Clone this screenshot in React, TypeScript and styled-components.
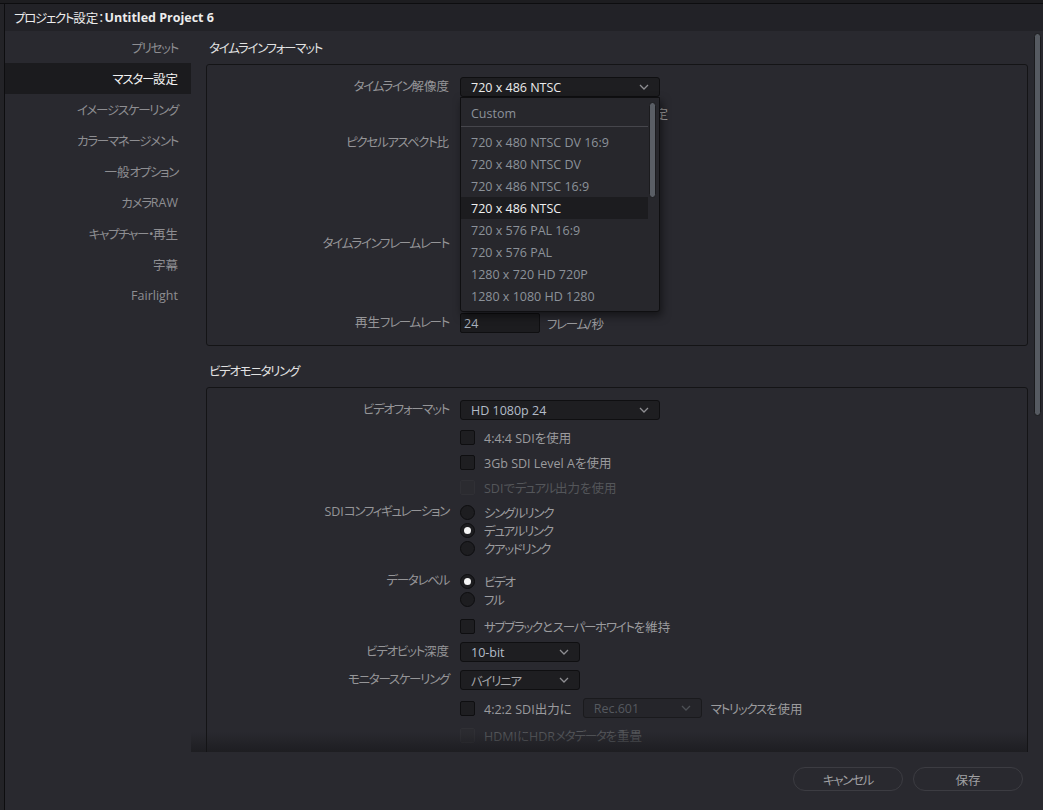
import React from 'react';
import styled, { createGlobalStyle, css } from 'styled-components';

const GlobalStyle = createGlobalStyle`
  html, body {
    margin: 0;
    padding: 0;
    background: #1c1c1f;
  }
  body {
    font-family: "Open Sans", "Noto Sans CJK JP", sans-serif;
    font-feature-settings: "palt";
    font-size: 12.5px;
    -webkit-font-smoothing: antialiased;
  }
  * { box-sizing: border-box; }
`;

// katakana in the app font is narrower than Noto's, so tighten those runs only
const Kana = styled.span`
  letter-spacing: -1.3px;
`;

const jp = (s: string) =>
  s.split(/([\u30a0-\u30ff]+)/).map((part, i) => (i % 2 ? <Kana key={i}>{part}</Kana> : part));

const Screen = styled.div`
  width: 1043px;
  height: 810px;
  display: flex;
  flex-direction: column;
  overflow: hidden;
  background: #1c1c1f;
`;

const TopStrip = styled.div`
  height: 4px;
  flex: none;
  background: #1d1d20;
  border-bottom: 1px solid #0d0d0f;
`;

const Main = styled.div`
  flex: 1;
  display: flex;
  min-height: 0;
`;

const LeftStrip = styled.div`
  width: 5px;
  flex: none;
  background: #232327;
  border-right: 1px solid #0d0d0f;
`;

const Dialog = styled.div`
  flex: 1;
  display: flex;
  flex-direction: column;
  background: #29292f;
  min-width: 0;
`;

const TitleBar = styled.div`
  height: 27px;
  flex: none;
  display: flex;
  align-items: center;
  padding-left: 9px;
  background: #222227;
  color: #ececec;
  font-size: 12.5px;
  white-space: pre;
`;

const TitleName = styled.span`
  font-weight: 700;
`;

const Body = styled.div`
  height: 721px;
  flex: none;
  display: flex;
  overflow: hidden;
`;

const Sidebar = styled.nav`
  width: 186px;
  flex: none;
  padding-top: 1px;
  display: flex;
  flex-direction: column;
`;

const NavItem = styled.div<{ $active?: boolean }>`
  height: 31px;
  display: flex;
  align-items: center;
  justify-content: flex-end;
  padding-right: 13px;
  color: ${(p) => (p.$active ? '#f2f2f2' : '#8e8e92')};
  background: ${(p) => (p.$active ? '#1b1b1e' : 'transparent')};
  white-space: pre;
`;

const Content = styled.div`
  flex: 1;
  display: flex;
  min-width: 0;
  position: relative;
`;

const ScrollPane = styled.div`
  flex: 1;
  padding-left: 15px;
  overflow: hidden;
  position: relative;
  &::after {
    content: '';
    position: absolute;
    left: 0;
    right: 0;
    bottom: 0;
    height: 20px;
    background: linear-gradient(to bottom, rgba(20, 20, 23, 0), rgba(20, 20, 23, 0.55));
    pointer-events: none;
  }
`;

const Track = styled.div`
  width: 15px;
  flex: none;
  padding: 2px 2px 0 6px;
`;

const Thumb = styled.div<{ $h: number }>`
  height: ${(p) => p.$h}px;
  background: #565a61;
  border: 1px solid #1b1b1e;
  border-radius: 4px;
`;

const SectionTitle = styled.div<{ $mt?: number }>`
  height: 33px;
  margin-top: ${(p) => p.$mt ?? 0}px;
  display: flex;
  align-items: center;
  padding-left: 3px;
  color: #e2e2e2;
  white-space: pre;
`;

const Panel = styled.div<{ $open?: boolean }>`
  border: 1px solid #141416;
  border-radius: 3px;
  padding: 12px 0 ${(p) => (p.$open ? 40 : 12)}px;
  display: flex;
  flex-direction: column;
`;

const Row = styled.div<{ $mt?: number }>`
  display: grid;
  grid-template-columns: 243px 1fr;
  column-gap: 10px;
  margin-top: ${(p) => p.$mt ?? 0}px;
  min-height: 20px;
`;

const Label = styled.div`
  text-align: right;
  line-height: 20px;
  height: 20px;
  padding-right: 1px;
  color: #959598;
  white-space: pre;
`;

const RadioLabel = styled(Label)`
  line-height: 18px;
`;

const Controls = styled.div`
  display: flex;
  align-items: center;
  height: 20px;
  position: relative;
`;

const Stack = styled.div`
  display: flex;
  flex-direction: column;
`;

const Select = styled.div<{ $w: number; $tone?: 'bright' | 'blue' | 'gray' | 'off' }>`
  width: ${(p) => p.$w}px;
  height: 20px;
  flex: none;
  display: flex;
  align-items: center;
  justify-content: space-between;
  padding: 0 10px;
  background: #1e1e21;
  border: 1px solid #0f0f11;
  border-radius: 3px;
  white-space: pre;
  color: ${(p) =>
    p.$tone === 'bright' ? '#ececec' : p.$tone === 'blue' ? '#b3bcc8' : p.$tone === 'off' ? '#55595f' : '#a5a5a8'};
  ${(p) =>
    p.$tone === 'off' &&
    css`
      background: #25252a;
      border-color: #1a1a1d;
    `}
`;

const Chevron = ({ dim }: { dim?: boolean }) => (
  <svg width="10" height="6" viewBox="0 0 10 6" style={{ flex: 'none' }}>
    <path d="M1 1 L5 5 L9 1" fill="none" stroke={dim ? '#4d5055' : '#8e8e92'} strokeWidth="1.3" />
  </svg>
);

const NumberInput = styled.div<{ $w: number }>`
  width: ${(p) => p.$w}px;
  height: 20px;
  flex: none;
  display: flex;
  align-items: center;
  padding-left: 3px;
  background: #1c1c1f;
  border: 1px solid #0f0f11;
  border-radius: 2px;
  color: #a9b2bd;
`;

const Text = styled.span<{ $off?: boolean; $ml?: number }>`
  color: ${(p) => (p.$off ? '#54565a' : '#9b9b9e')};
  margin-left: ${(p) => p.$ml ?? 0}px;
  white-space: pre;
`;

const Box = styled.span<{ $off?: boolean }>`
  width: 15px;
  height: 15px;
  flex: none;
  border-radius: 2px;
  background: ${(p) => (p.$off ? '#2b2b30' : '#1e1e21')};
  border: 1px solid ${(p) => (p.$off ? '#303035' : '#0e0e10')};
`;

const RadioItem = styled.div`
  height: 18px;
  display: flex;
  align-items: center;
`;

const Dot = styled.span<{ $on?: boolean }>`
  width: 15px;
  height: 15px;
  flex: none;
  border-radius: 50%;
  background: #1d1d20;
  border: 1px solid #0d0d0f;
  display: flex;
  align-items: center;
  justify-content: center;
  &::after {
    content: '';
    width: 7px;
    height: 7px;
    border-radius: 50%;
    background: ${(p) => (p.$on ? '#f4f4f4' : 'transparent')};
  }
`;

const Menu = styled.div`
  position: absolute;
  top: 20px;
  left: 0;
  width: 200px;
  height: 215px;
  display: flex;
  background: #27272c;
  border: 1px solid #0f0f11;
  border-radius: 0 0 3px 3px;
  box-shadow: 2px 4px 8px rgba(0, 0, 0, 0.5);
  z-index: 10;
`;

const MenuList = styled.div`
  flex: 1;
  padding-top: 4px;
  display: flex;
  flex-direction: column;
`;

const MenuItem = styled.div<{ $sel?: boolean }>`
  height: 22px;
  flex: none;
  display: flex;
  align-items: center;
  padding-left: 10px;
  white-space: pre;
  color: ${(p) => (p.$sel ? '#f0f0f0' : '#8c929a')};
  background: ${(p) => (p.$sel ? '#1c1c1f' : 'transparent')};
`;

const MenuSep = styled.div`
  height: 1px;
  flex: none;
  margin: 2px 0 4px;
  background: #46464c;
`;

const MenuTrack = styled.div`
  width: 11px;
  flex: none;
  padding: 4px 3px 0 1px;
`;

const MenuThumb = styled.div`
  height: 96px;
  background: #5a5e65;
  border: 1px solid #1b1b1e;
  border-radius: 4px;
`;

const Footer = styled.div`
  height: 58px;
  flex: none;
  display: flex;
  justify-content: flex-end;
  align-items: flex-start;
  gap: 10px;
  padding: 15px 20px 0 0;
  background: #29292f;
`;

const Button = styled.button`
  width: 110px;
  height: 24px;
  border-radius: 12px;
  border: 1px solid #3c3c42;
  background: transparent;
  color: #a0a0a3;
  font-family: inherit;
  font-size: 12.5px;
  font-feature-settings: "palt";
  padding: 0;
`;

const navItems = [
  'プリセット',
  'マスター設定',
  'イメージスケーリング',
  'カラーマネージメント',
  '一般オプション',
  'カメラRAW',
  'キャプチャー・再生',
  '字幕',
  'Fairlight',
];

const resolutions = [
  '720 x 480 NTSC DV 16:9',
  '720 x 480 NTSC DV',
  '720 x 486 NTSC 16:9',
  '720 x 486 NTSC',
  '720 x 576 PAL 16:9',
  '720 x 576 PAL',
  '1280 x 720 HD 720P',
  '1280 x 1080 HD 1280',
];

const Check = ({ label, off, mt }: { label: string; off?: boolean; mt: number }) => (
  <Row $mt={mt}>
    <Label />
    <Controls>
      <Box $off={off} />
      <Text $off={off} $ml={9}>
        {jp(label)}
      </Text>
    </Controls>
  </Row>
);

const RadioGroup = ({ label, options, selected, mt }: { label: string; options: string[]; selected: number; mt: number }) => (
  <Row $mt={mt}>
    <RadioLabel>{jp(label)}</RadioLabel>
    <Stack>
      {options.map((o, i) => (
        <RadioItem key={o}>
          <Dot $on={i === selected} />
          <Text $ml={9}>{jp(o)}</Text>
        </RadioItem>
      ))}
    </Stack>
  </Row>
);

export default function App() {
  return (
    <>
      <GlobalStyle />
      <Screen>
        <TopStrip />
        <Main>
          <LeftStrip />
          <Dialog>
            <TitleBar>
              {jp('プロジェクト設定：')}
              <TitleName>Untitled Project 6</TitleName>
            </TitleBar>
            <Body>
              <Sidebar>
                {navItems.map((n) => (
                  <NavItem key={n} $active={n === 'マスター設定'}>
                    {jp(n)}
                  </NavItem>
                ))}
              </Sidebar>
              <Content>
                <ScrollPane>
                  <SectionTitle>{jp('タイムラインフォーマット')}</SectionTitle>
                  <Panel>
                    <Row>
                      <Label>{jp('タイムライン解像度')}</Label>
                      <Controls>
                        <Select $w={200} $tone="bright">
                          720 x 486 NTSC
                          <Chevron />
                        </Select>
                        <Menu>
                          <MenuList>
                            <MenuItem>Custom</MenuItem>
                            <MenuSep />
                            {resolutions.map((r) => (
                              <MenuItem key={r} $sel={r === '720 x 486 NTSC'}>
                                {r}
                              </MenuItem>
                            ))}
                          </MenuList>
                          <MenuTrack>
                            <MenuThumb />
                          </MenuTrack>
                        </Menu>
                      </Controls>
                    </Row>
                    <Row $mt={6}>
                      <Label />
                      <Controls>
                        <Text $ml={183}>設定</Text>
                      </Controls>
                    </Row>
                    <Row $mt={10}>
                      <Label>{jp('ピクセルアスペクト比')}</Label>
                      <Controls />
                    </Row>
                    <Row $mt={81}>
                      <Label>{jp('タイムラインフレームレート')}</Label>
                      <Controls />
                    </Row>
                    <Row $mt={59}>
                      <Label>{jp('再生フレームレート')}</Label>
                      <Controls>
                        <NumberInput $w={80}>24</NumberInput>
                        <Text $ml={7}>{jp('フレーム/秒')}</Text>
                      </Controls>
                    </Row>
                  </Panel>

                  <SectionTitle $mt={8}>{jp('ビデオモニタリング')}</SectionTitle>
                  <Panel $open>
                    <Row>
                      <Label>{jp('ビデオフォーマット')}</Label>
                      <Controls>
                        <Select $w={200} $tone="blue">
                          HD 1080p 24
                          <Chevron />
                        </Select>
                      </Controls>
                    </Row>
                    <Check mt={7} label="4:4:4 SDIを使用" />
                    <Check mt={5} label="3Gb SDI Level Aを使用" />
                    <Check mt={5} off label="SDIでデュアル出力を使用" />
                    <RadioGroup
                      mt={6}
                      label="SDIコンフィギュレーション"
                      options={['シングルリンク', 'デュアルリンク', 'クアッドリンク']}
                      selected={1}
                    />
                    <RadioGroup mt={15} label="データレベル" options={['ビデオ', 'フル']} selected={0} />
                    <Check mt={8} label="サブブラックとスーパーホワイトを維持" />
                    <Row $mt={6}>
                      <Label>{jp('ビデオビット深度')}</Label>
                      <Controls>
                        <Select $w={120} $tone="blue">
                          10-bit
                          <Chevron />
                        </Select>
                      </Controls>
                    </Row>
                    <Row $mt={8}>
                      <Label>{jp('モニタースケーリング')}</Label>
                      <Controls>
                        <Select $w={120} $tone="gray">
                          <span>{jp('バイリニア')}</span>
                          <Chevron />
                        </Select>
                      </Controls>
                    </Row>
                    <Row $mt={8}>
                      <Label />
                      <Controls>
                        <Box />
                        <Text $ml={9}>4:2:2 SDI出力に</Text>
                        <Select $w={119} $tone="off" style={{ marginLeft: 11 }}>
                          Rec.601
                          <Chevron dim />
                        </Select>
                        <Text $ml={9}>{jp('マトリックスを使用')}</Text>
                      </Controls>
                    </Row>
                    <Check mt={7} off label="HDMIにHDRメタデータを重畳" />
                  </Panel>
                </ScrollPane>
                <Track>
                  <Thumb $h={383} />
                </Track>
              </Content>
            </Body>
            <Footer>
              <Button>{jp('キャンセル')}</Button>
              <Button>保存</Button>
            </Footer>
          </Dialog>
        </Main>
      </Screen>
    </>
  );
}
